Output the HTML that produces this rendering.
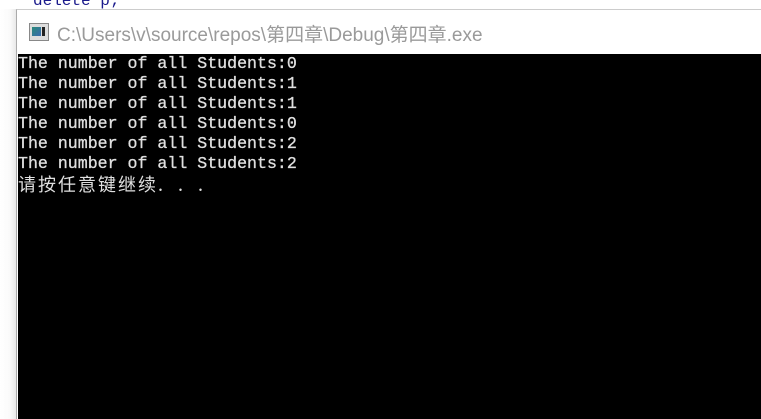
<!DOCTYPE html>
<html><head><meta charset="utf-8"><style>
html,body{margin:0;padding:0;width:761px;height:419px;overflow:hidden;background:#fff;position:relative}
.code{position:absolute;left:33px;top:-8px;font:16px "Liberation Mono",monospace;color:#1a1a8c}
.shadow{position:absolute;left:0;top:9px;width:17px;height:410px;background:linear-gradient(to right,#fff 0,#fafafa 60%,#e6e6e6 100%)}
.win{position:absolute;left:16px;top:9px;width:745px;height:410px;border-left:1px solid #aaa;border-top:1px solid #ccc;background:#fff}
.title{position:absolute;left:40px;top:10px;font:19px "Liberation Sans","Noto Sans CJK SC",sans-serif;color:#9a9a9a;white-space:nowrap}
.icon{position:absolute;left:12px;top:13px;width:18px;height:16px;border:1px solid #888;background:#ddd}
.icon i{position:absolute;left:2px;top:3px;width:9px;height:9px;background:linear-gradient(135deg,#2a8a7a,#3a6ab0)}
.icon b{position:absolute;left:12px;top:3px;width:3px;height:9px;background:#222}
.con{position:absolute;left:1px;top:44px;width:744px;height:366px;background:#000;color:#e0e0e0;font:16.6px/20px "Liberation Mono","Noto Sans CJK SC",monospace;white-space:pre;-webkit-text-stroke:0.3px #e0e0e0}
.con div{height:20px}
.cn{font-family:"Noto Sans CJK SC","WenQuanYi Zen Hei",sans-serif;font-size:18px;-webkit-text-stroke:0;letter-spacing:2px}
.cn span{display:inline-block;width:20px;letter-spacing:0}
</style></head><body>
<div class="code">delete p;</div>
<div class="shadow"></div>
<div class="win">
<div class="icon"><i></i><b></b></div>
<div class="title">C:\Users\v\source\repos\第四章\Debug\第四章.exe</div>
<div class="con"><div>The number of all Students:0</div><div>The number of all Students:1</div><div>The number of all Students:1</div><div>The number of all Students:0</div><div>The number of all Students:2</div><div>The number of all Students:2</div><div class="cn">请按任意键继续<span>.</span><span>.</span><span>.</span></div></div>
</div>
</body></html>
